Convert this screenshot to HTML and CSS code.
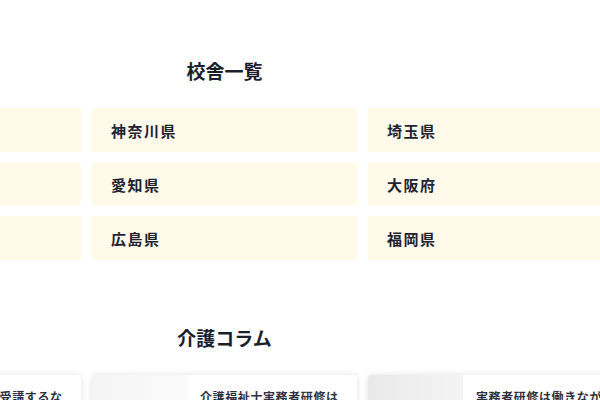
FILE: index.html
```html
<!DOCTYPE html>
<html lang="ja">
<head>
<meta charset="utf-8">
<title>校舎一覧</title>
<link rel="stylesheet" href="styles.css">
</head>
<body>
<div class="wrap">
  <section class="campus">
    <h2 class="heading">校舎一覧</h2>
    <ul class="campus-grid">
      <li class="campus-item">東京都</li>
      <li class="campus-item">神奈川県</li>
      <li class="campus-item">埼玉県</li>
      <li class="campus-item">千葉県</li>
      <li class="campus-item">愛知県</li>
      <li class="campus-item">大阪府</li>
      <li class="campus-item">兵庫県</li>
      <li class="campus-item">広島県</li>
      <li class="campus-item">福岡県</li>
    </ul>
  </section>
  <section class="column">
    <h2 class="heading heading-column">介護コラム</h2>
    <div class="card-grid">
      <article class="card">
        <div class="card-thumb thumb-a"></div>
        <p class="card-text">初任者研修を受講するならどこがいい？選び方を解説</p>
      </article>
      <article class="card">
        <div class="card-thumb thumb-b"></div>
        <p class="card-text">介護福祉士実務者研修は何が学べる？内容と費用</p>
      </article>
      <article class="card">
        <div class="card-thumb thumb-c"></div>
        <p class="card-text">実務者研修は働きながら取得できる？通い方のコツ</p>
      </article>
    </div>
  </section>
</div>
</body>
</html>
```

FILE: styles.css
```css
html, body {
  margin: 0;
  padding: 0;
  background: #ffffff;
  overflow: hidden;
}

body {
  font-family: "Noto Sans CJK JP", "Noto Sans", sans-serif;
  color: #1d2130;
}

.wrap {
  width: 817px;
  margin-left: -184px;
}

.heading {
  margin: 0;
  font-size: 19px;
  line-height: 28px;
  font-weight: 700;
  text-align: center;
  color: #1b1f2c;
}

.campus {
  padding-top: 57px;
}

.campus-grid {
  list-style: none;
  margin: 23px 0 0;
  padding: 0;
  display: grid;
  grid-template-columns: repeat(3, 265px);
  column-gap: 11px;
  row-gap: 10px;
}

.campus-item {
  height: 44px;
  display: flex;
  align-items: center;
  padding-left: 19px;
  background: #fffaea;
  font-size: 15px;
  font-weight: 700;
  letter-spacing: 1.5px;
  color: #1f2331;
}

.heading-column {
  margin-top: 64px;
}

.card-grid {
  margin-top: 23px;
  display: grid;
  grid-template-columns: repeat(3, 265px);
  column-gap: 11px;
}

.card {
  display: flex;
  height: 110px;
  background: #ffffff;
  border-radius: 4px;
  box-shadow: 0 0 6px rgba(0, 0, 0, 0.12);
  overflow: hidden;
}

.card-thumb {
  flex: 0 0 95px;
}

.thumb-a {
  background: linear-gradient(90deg, #eeeeee, #f6f6f6);
}

.thumb-b {
  background: linear-gradient(90deg, #f4f4f4, #fbfbfb);
}

.thumb-c {
  background: linear-gradient(90deg, #e9e9e9, #f4f4f4);
}

.card-text {
  margin: 0;
  padding: 12px 14px 0 13px;
  font-size: 12px;
  line-height: 19px;
  font-weight: 700;
  letter-spacing: 0.6px;
  color: #2e3140;
}
```
